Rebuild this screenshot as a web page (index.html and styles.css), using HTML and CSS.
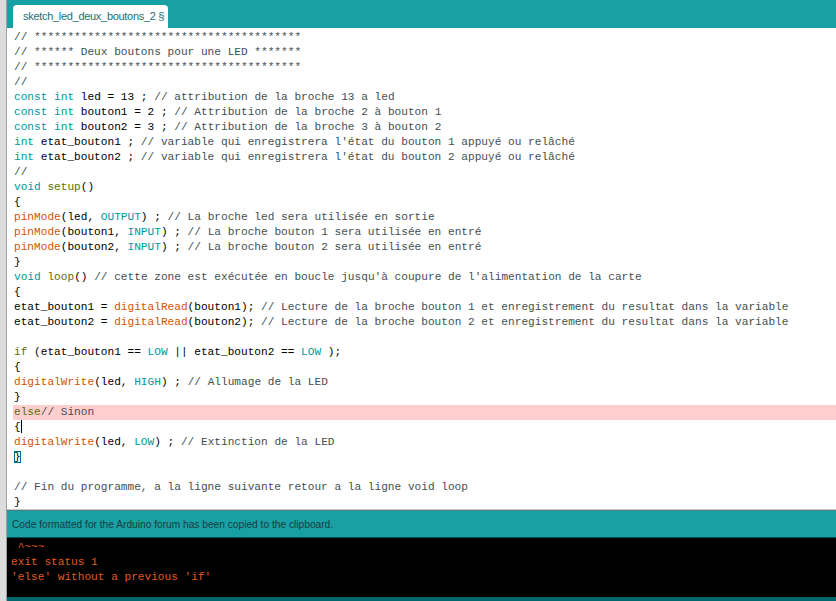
FILE: index.html
```html
<!doctype html>
<html lang="fr">
  <head>
    <meta charset="utf-8">
    <title>sketch_led_deux_boutons_2 | Arduino</title>
    <link rel="stylesheet" href="styles.css">
  </head>
  <body>
    <div class="side"></div>
    <div class="main">
      <div class="tabbar">
        <div class="tab">sketch_led_deux_boutons_2 &sect;</div>
      </div>
      <div class="editor">
        <div class="code">
<div class="ln"><span class="cm">// ****************************************</span></div>
<div class="ln"><span class="cm">// ****** Deux boutons pour une LED *******</span></div>
<div class="ln"><span class="cm">// ****************************************</span></div>
<div class="ln"><span class="cm">//</span></div>
<div class="ln"><span class="kw">const</span> <span class="kw">int</span> led = 13 ; <span class="cm">// attribution de la broche 13 a led</span></div>
<div class="ln"><span class="kw">const</span> <span class="kw">int</span> bouton1 = 2 ; <span class="cm">// Attribution de la broche 2 à bouton 1</span></div>
<div class="ln"><span class="kw">const</span> <span class="kw">int</span> bouton2 = 3 ; <span class="cm">// Attribution de la broche 3 à bouton 2</span></div>
<div class="ln"><span class="kw">int</span> etat_bouton1 ; <span class="cm">// variable qui enregistrera l'état du bouton 1 appuyé ou relâché</span></div>
<div class="ln"><span class="kw">int</span> etat_bouton2 ; <span class="cm">// variable qui enregistrera l'état du bouton 2 appuyé ou relâché</span></div>
<div class="ln"><span class="cm">//</span></div>
<div class="ln"><span class="kw">void</span> <span class="st">setup</span>()</div>
<div class="ln">{</div>
<div class="ln"><span class="fn">pinMode</span>(led, <span class="kw">OUTPUT</span>) ; <span class="cm">// La broche led sera utilisée en sortie</span></div>
<div class="ln"><span class="fn">pinMode</span>(bouton1, <span class="kw">INPUT</span>) ; <span class="cm">// La broche bouton 1 sera utilisée en entré</span></div>
<div class="ln"><span class="fn">pinMode</span>(bouton2, <span class="kw">INPUT</span>) ; <span class="cm">// La broche bouton 2 sera utilisée en entré</span></div>
<div class="ln">}</div>
<div class="ln"><span class="kw">void</span> <span class="st">loop</span>() <span class="cm">// cette zone est exécutée en boucle jusqu'à coupure de l'alimentation de la carte</span></div>
<div class="ln">{</div>
<div class="ln">etat_bouton1 = <span class="fn">digitalRead</span>(bouton1); <span class="cm">// Lecture de la broche bouton 1 et enregistrement du resultat dans la variable</span></div>
<div class="ln">etat_bouton2 = <span class="fn">digitalRead</span>(bouton2); <span class="cm">// Lecture de la broche bouton 2 et enregistrement du resultat dans la variable</span></div>
<div class="ln"> </div>
<div class="ln"><span class="st">if</span> (etat_bouton1 == <span class="kw">LOW</span> || etat_bouton2 == <span class="kw">LOW</span> );</div>
<div class="ln">{</div>
<div class="ln"><span class="fn">digitalWrite</span>(led, <span class="kw">HIGH</span>) ; <span class="cm">// Allumage de la LED</span></div>
<div class="ln">}</div>
<div class="ln error"><span class="st">else</span><span class="cm">// Sinon</span></div>
<div class="ln">{<span class="caret"></span></div>
<div class="ln"><span class="fn">digitalWrite</span>(led, <span class="kw">LOW</span>) ; <span class="cm">// Extinction de la LED</span></div>
<div class="ln"><span class="match">}</span></div>
<div class="ln"> </div>
<div class="ln"><span class="cm">// Fin du programme, a la ligne suivante retour a la ligne void loop</span></div>
<div class="ln">}</div>
        </div>
      </div>
      <div class="status">Code formatted for the Arduino forum has been copied to the clipboard.</div>
      <div class="console">
<div class="out"> ^~~~</div>
<div class="out">exit status 1</div>
<div class="out">'else' without a previous 'if'</div>
      </div>
      <div class="footer"></div>
    </div>
  </body>
</html>
```

FILE: styles.css
```css
body {
     margin: 0;
     display: flex;
     height: 601px;
     overflow: hidden;
     background-color: #fff;
}
.side {
     width: 6px;
     background-color: #dcdcdc;
     border-right: 1px solid #a0a0a0;
     flex: none;
}
.main {
     flex: 1;
     display: flex;
     flex-direction: column;
     min-width: 0;
}
.tabbar {
     height: 28px;
     background-color: #17a1a5;
     padding-left: 6px;
     display: flex;
     align-items: flex-end;
     flex: none;
}
.tab {
     background-color: #fff;
     height: 23px;
     width: 155px;
     box-sizing: border-box;
     padding: 5px 0 0 10px;
     border-radius: 4px 4px 0 0;
     font-family: "Liberation Sans", Arial, sans-serif;
     font-size: 11px;
     letter-spacing: -0.3px;
     white-space: nowrap;
     color: #1f6d70;
}
.editor {
     height: 479px;
     padding-top: 2px;
     background-color: #fff;
     border-bottom: 1px solid #c8c8c8;
     padding-left: 6px;
     flex: none;
     overflow: hidden;
}
.code {
     font-family: "Liberation Mono", "Courier New", monospace;
     font-size: 11.13px;
     color: #000;
}
.ln {
     height: 15px;
     line-height: 15px;
     padding-left: 1px;
     white-space: pre;
}
.ln.error {
     background-color: #ffcfcf;
}
.kw {
     color: #00979c;
}
.st {
     color: #5e6d03;
}
.fn {
     color: #d35400;
}
.cm {
     color: #434f54;
}
.caret {
     display: inline-block;
     width: 1px;
     height: 13px;
     background-color: #000;
     vertical-align: -3px;
}
.match {
     outline: 1px solid #006699;
     outline-offset: -1px;
}
.status {
     height: 27px;
     background-color: #17a1a5;
     border-top: 1px solid #4a7f82;
     box-sizing: border-box;
     padding: 8px 0 0 5px;
     font-family: "Liberation Sans", Arial, sans-serif;
     font-size: 10.2px;
     color: #1b3c3e;
     flex: none;
}
.console {
     height: 60px;
     box-sizing: border-box;
     padding: 2px 0 0 4px;
     background-color: #000;
     border-top: 1px solid #0b4f52;
     font-family: "Liberation Mono", "Courier New", monospace;
     font-size: 11.13px;
     color: #e2591c;
     flex: none;
}
.out {
     height: 15px;
     line-height: 15px;
     white-space: pre;
}
.footer {
     flex: 1;
     background-color: #00676b;
}
```
